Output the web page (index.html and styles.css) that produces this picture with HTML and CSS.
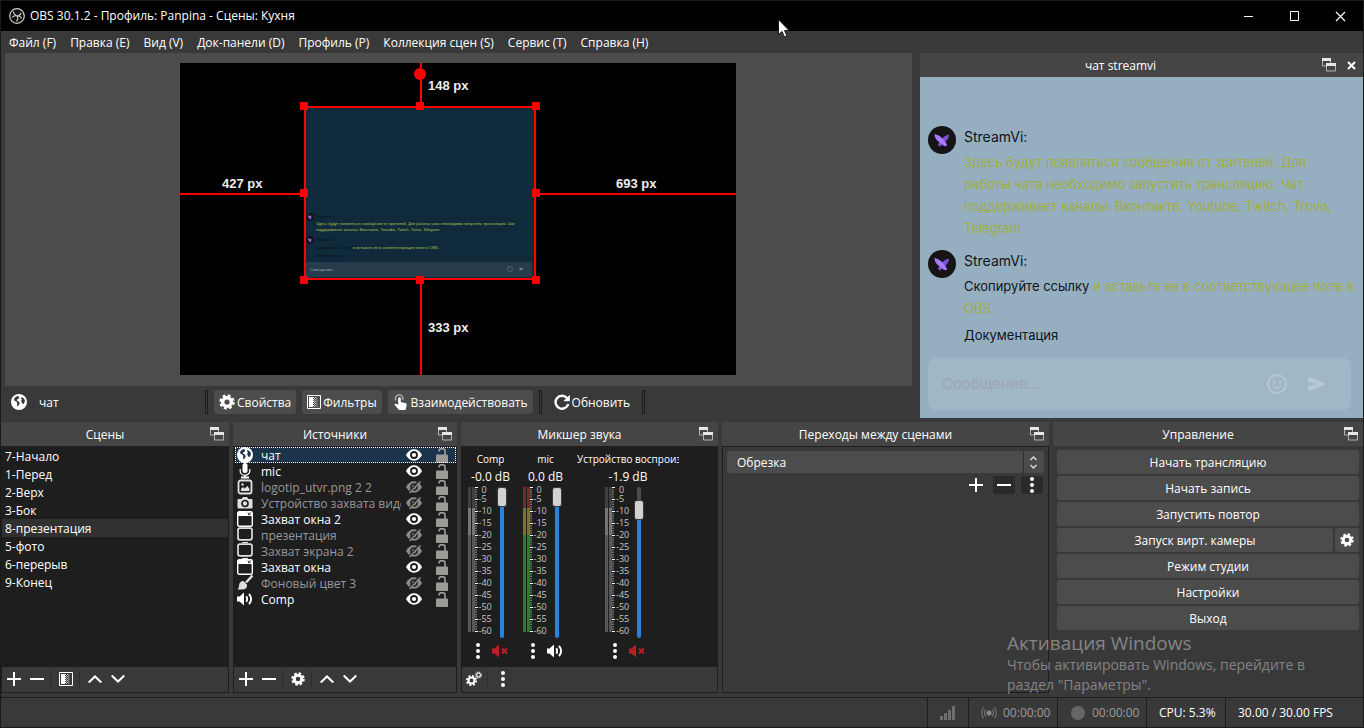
FILE: index.html
```html
<!DOCTYPE html>
<html lang="ru">
<head>
<meta charset="utf-8">
<title>OBS 30.1.2 - Профиль: Panpina - Сцены: Кухня</title>
<link rel="stylesheet" href="styles.css">
</head>
<body>
<svg class="sprite" aria-hidden="true">
  <symbol id="popout" viewBox="0 0 14 14"><path d="M.5 1v7h4M8.500 5V1" fill="none" stroke="#b4b4b4"/><path d="M0 0h9v3H0z" fill="#e6e6e6"/><path d="M4.500 7v6h9V7" fill="none" stroke="#b4b4b4"/><path d="M4 5h10v3H4z" fill="#e6e6e6"/></symbol>
  <symbol id="globe" viewBox="0 0 16 16"><circle cx="8" cy="8" r="8" fill="#fff"/><path class="land" d="M7 2 4.500 3 3 5l.300 1.500L5 7.500l1.300 1.200-.300 2L6.800 13l.900-2L9 9 7.500 7.500 5.800 6.500 6.500 5l1.500-.5V3zM10.500 3 10 4.500l1 1L10 7l.800 1.500 1.200 2 1.200-1.500.800-2-1-2.500z"/></symbol>
  <symbol id="gear" viewBox="0 0 16 16"><circle cx="8" cy="8" r="4.300" fill="none" stroke="#fff" stroke-width="3.400"/><circle cx="8" cy="8" r="6.300" fill="none" stroke="#fff" stroke-width="2.800" stroke-dasharray="2.750 2.198"/></symbol>
  <symbol id="filters" viewBox="0 0 14 14"><path d="M.5.5h13v13H.5z" fill="none" stroke="#fff"/><path d="M2 2h4v10H2z" fill="#fff"/><path d="M6.500 2v10" stroke="#fff" stroke-dasharray="1 1"/><path d="M7.500 3v9M8.500 2v10" stroke="#bbb" stroke-dasharray="1 1"/><path d="M9 2h1v10H9z" fill="#777"/><path d="M10.500 3v9" stroke="#777" stroke-dasharray="1 1"/></symbol>
  <symbol id="hand" viewBox="0 0 14 16"><path d="M2 6.500A3.700 3.700 0 1 1 8.500 6" fill="none" stroke="#a8a8a8" stroke-width="1.500"/><path d="M4.200 4.500a1.300 1.300 0 0 1 2.600 0V8L12 9.200q.800.300.700 1.200L12 14.500q0 1.500-1.500 1.500H5L.700 11q-.500-1 .600-1.300.700-.2 2.900 1z" fill="#fff"/></symbol>
  <symbol id="refresh" viewBox="0 0 16 16"><path d="M13 4A6.500 6.500 0 1 0 14.300 10" fill="none" stroke="#fff" stroke-width="2.400"/><path d="M15.800.800v6.500H9.300z" fill="#fff"/></symbol>
  <symbol id="mic" viewBox="0 0 16 16"><rect x="5.500" y="0" width="5" height="10" rx="2.500" fill="#fff"/><path d="M3.200 6v2a4.800 4.300 0 0 0 9.600 0V6" fill="none" stroke="#fff" stroke-width="1.200"/><path d="M7.300 12h1.400v1.500H12V15.500H4V13.500h3.300z" fill="#fff"/></symbol>
  <symbol id="image" viewBox="0 0 16 16"><rect x="1.500" y="1.500" width="13" height="13" rx="2" fill="none" stroke="#e0e0e0" stroke-width="1.800"/><path d="M4 12V10l2-2 1.500 1.500L10.500 7 12.500 10v2z" fill="#e0e0e0"/><circle cx="5.500" cy="5.500" r="1.200" fill="#e0e0e0"/></symbol>
  <symbol id="camera" viewBox="0 0 16 16"><path d="M1.500 4H4.500L6 2h4l1.500 2h3q1 0 1 1v7.500q0 1-1 1h-13q-1 0-1-1V5q0-1 1-1z" fill="#e0e0e0"/><circle cx="8" cy="8.500" r="3" fill="none" stroke="#1f1e1f" stroke-width="1.700"/></symbol>
  <symbol id="window" viewBox="0 0 16 16"><rect x=".7" y=".7" width="14.600" height="14.600" rx="1.500" fill="none" stroke="#fff" stroke-width="1.400"/><path d="M1 1h14v4H1z" fill="#fff"/><path d="m11 1.500 2.500 2.500M13.500 1.500 11 4" stroke="#1f1e1f"/></symbol>
  <symbol id="display" viewBox="0 0 16 16"><rect x="1" y="1.200" width="14" height="11.600" rx="2" fill="none" stroke="#e0e0e0" stroke-width="1.700"/><path d="M5 15h6v1H5z" fill="#e0e0e0"/></symbol>
  <symbol id="brush" viewBox="0 0 16 16"><path d="M15.500.5 9 7.500" stroke="#e0e0e0" stroke-width="2.400"/><path d="M6.500 6 10 9.500q.5 5-5 5H.500Q2 13 2 10.500 2.500 6 6.500 6z" fill="#e0e0e0"/></symbol>
  <symbol id="speaker" viewBox="0 0 16 14"><path d="M0 4.500h2.500L7 .5v13L2.500 9.500H0z" fill="#fff"/><path d="M9.300 4.200q1.700 2.800 0 5.600M12 1.800q4.200 5.200 0 10.400" fill="none" stroke="#fff" stroke-width="1.900"/></symbol>
  <symbol id="muted" viewBox="0 0 16 14"><path d="M0 4.500h2.500L7 .5v13L2.500 9.500H0z" fill="#c01c28"/><path d="m10 4.500 5 5M15 4.500l-5 5" stroke="#c01c28" stroke-width="2"/></symbol>
  <symbol id="eye" viewBox="0 0 16 12"><path d="M0 6Q3 .3 8 .3T16 6Q13 11.700 8 11.700T0 6z" fill="#fff"/><circle cx="8" cy="6" r="3" fill="none" stroke="#1f1e1f" stroke-width="1.800"/></symbol>
  <symbol id="eyeoff" viewBox="0 0 16 12"><path d="M0 6Q3 .3 8 .3T16 6Q13 11.700 8 11.700T0 6z" fill="#8c8a86"/><circle cx="8" cy="6" r="3" fill="none" stroke="#1f1e1f" stroke-width="1.500"/><path d="M2 12.500 13.500-1" stroke="#1f1e1f" stroke-width="1.500"/><path d="M3.500 12 14.500.5" stroke="#8c8a86" stroke-width="1.500"/></symbol>
  <symbol id="lock" viewBox="0 0 12 15"><path d="M3 3.500V3a3 2.400 0 0 1 6 0v5" fill="none" stroke="#9c9a97" stroke-width="1.700"/><rect x="0" y="6.500" width="12" height="8.500" rx="1" fill="#9c9a97"/></symbol>
  <symbol id="plus" viewBox="0 0 14 14"><path d="M7 0v14M0 7h14" stroke="#fff" stroke-width="2"/></symbol>
  <symbol id="minus" viewBox="0 0 14 14"><path d="M0 7h14" stroke="#fff" stroke-width="2"/></symbol>
  <symbol id="up" viewBox="0 0 14 14"><path d="M.700 10.500 7 4.500l6.300 6" fill="none" stroke="#fff" stroke-width="2"/></symbol>
  <symbol id="down" viewBox="0 0 14 14"><path d="M.700 3.500 7 9.500l6.300-6" fill="none" stroke="#fff" stroke-width="2"/></symbol>
  <symbol id="dots" viewBox="0 0 4 16"><circle cx="2" cy="2" r="2" fill="#fff"/><circle cx="2" cy="8" r="2" fill="#fff"/><circle cx="2" cy="14" r="2" fill="#fff"/></symbol>
  <symbol id="gears" viewBox="0 0 16 16"><circle cx="5.500" cy="9.500" r="3" fill="none" stroke="#fff" stroke-width="2.200"/><circle cx="5.500" cy="9.500" r="4.700" fill="none" stroke="#fff" stroke-width="1.800" stroke-dasharray="1.900 1.791"/><circle cx="12.500" cy="4" r="1.900" fill="none" stroke="#ddd" stroke-width="1.300"/><circle cx="12.500" cy="4" r="2.900" fill="none" stroke="#ddd" stroke-width="1.200" stroke-dasharray="1.200 1.078"/></symbol>
  <symbol id="butterfly" viewBox="0 0 28 28"><circle cx="14" cy="14" r="14" fill="#151515"/><path d="M21 8.500q-5 1-7.500 5L10 18q0 2 2 2.500 2-1 3-3 1 3 3.500 2.500.5-2-1-4.500Q21 12.500 21 8.500z" fill="#7c4fd8"/><path d="M6.500 8q5 1 8.500 5l4 6q-1 2-3.500.5l-5-4Q6.500 12.500 6.500 8z" fill="#a67dff"/></symbol>
  <symbol id="ticks" viewBox="0 0 3 146"><path d="M1 0v145" stroke="#8a8a8a" stroke-width="2" stroke-dasharray="1 1.400"/><path d="M1.500 0v146" stroke="#fff" stroke-width="3" stroke-dasharray="1 11"/></symbol>
</svg>

<header class="titlebar">
  <svg class="logo" viewBox="0 0 16 16"><circle cx="8" cy="8" r="7.300" fill="#111" stroke="#d0d0d0" stroke-width="1.200"/><path d="M4.500 3.500q0 3 3.500 4.500 3 0 4-3M8 8q1.800 2.500-.5 5.500M8 8Q5 7 3 9.500M8 8q3.500-.5 4.500 2.500" fill="none" stroke="#d0d0d0" stroke-width="1.100"/></svg>
  <span class="title">OBS 30.1.2 - Профиль: Panpina - Сцены: Кухня</span>
  <div class="winbuttons">
    <button aria-label="Свернуть"><svg viewBox="0 0 11 11"><path d="M1 5.500h9" stroke="#fff"/></svg></button>
    <button aria-label="Развернуть"><svg viewBox="0 0 11 11"><path d="M1.500.5h8v9h-8z" fill="none" stroke="#fff"/></svg></button>
    <button aria-label="Закрыть"><svg viewBox="0 0 11 11"><path d="m1 1 9 9M10 1 1 10" stroke="#fff" stroke-width="1.200"/></svg></button>
  </div>
</header>

<nav class="menubar">
  <button>Файл (F)</button><button>Правка (E)</button><button>Вид (V)</button><button>Док-панели (D)</button><button>Профиль (P)</button><button>Коллекция сцен (S)</button><button>Сервис (T)</button><button>Справка (H)</button>
</nav>

<main class="upper">
  <section class="stage">
    <div class="preview">
      <svg class="canvas" viewBox="0 0 556 312">
        <rect width="556" height="312" fill="#000"/>
        <rect x="125" y="44" width="230" height="172" fill="#0e2a3b"/>
        <rect x="126" y="199" width="226" height="15" rx="2" fill="#263c4b"/>
        <use href="#butterfly" x="126" y="150" width="8" height="8"/>
        <use href="#butterfly" x="126" y="173" width="8" height="8"/>
        <g class="tiny">
          <text class="dim" x="136" y="155">StreamVi:</text>
          <text x="136" y="162">Здесь будут появляться сообщения от зрителей. Для работы чата необходимо запустить трансляцию. Чат</text>
          <text x="136" y="168">поддерживает каналы: Вконтакте, Youtube, Twitch, Trovo, Telegram</text>
          <text class="dim" x="136" y="178">StreamVi:</text>
          <text x="136" y="186"><tspan class="dim">Скопируйте ссылку</tspan> и вставьте ее в соответствующее поле в OBS.</text>
          <text class="dim" x="136" y="194">Документация</text>
          <text class="hint" x="130" y="208">Сообщение...</text>
        </g>
        <circle cx="330" cy="206" r="2.500" fill="none" stroke="#6b7c87" stroke-width=".6"/>
        <path d="m339 204 5 2-5 2 1-2z" fill="#6b7c87"/>
        <g fill="none" stroke="#f00" stroke-width="2">
          <path d="M241 0v44M241 216v96M0 131h125M355 131h201"/>
          <rect x="125" y="44" width="230" height="172"/>
        </g>
        <g fill="#f00">
          <circle cx="240" cy="11" r="6"/>
          <path d="M120 39h8v8h-8zM236 39h8v8h-8zM352 39h8v8h-8zM120 126h8v8h-8zM352 126h8v8h-8zM120 213h8v8h-8zM236 213h8v8h-8zM352 213h8v8h-8z"/>
        </g>
        <g class="measure">
          <text x="248" y="27">148 px</text>
          <text x="42" y="125">427 px</text>
          <text x="436" y="125">693 px</text>
          <text x="248" y="269">333 px</text>
        </g>
      </svg>
    </div>
    <div class="context">
      <div class="source-name"><svg class="i16 on-panel"><use href="#globe"/></svg><span>чат</span></div>
      <i class="grip"></i>
      <button class="btn"><svg class="i16"><use href="#gear"/></svg><span>Свойства</span></button>
      <button class="btn"><svg class="i14"><use href="#filters"/></svg><span>Фильтры</span></button>
      <button class="btn"><svg class="i16"><use href="#hand"/></svg><span>Взаимодействовать</span></button>
      <i class="grip"></i>
      <button class="btn flat"><svg class="i16"><use href="#refresh"/></svg><span>Обновить</span></button>
      <i class="grip"></i>
    </div>
  </section>

  <section class="chat">
    <header class="dockhead"><h2>чат streamvi</h2><button aria-label="Открепить"><svg class="i14"><use href="#popout"/></svg></button><button aria-label="Закрыть"><svg class="i9" viewBox="0 0 9 9"><path d="m1 1 7 7M8 1 1 8" stroke="#fff" stroke-width="2"/></svg></button></header>
    <div class="chatbody">
      <article class="msg">
        <svg class="avatar"><use href="#butterfly"/></svg>
        <div><h3>StreamVi:</h3><p>Здесь будут появляться сообщения от зрителей. Для работы чата необходимо запустить трансляцию. Чат поддерживает каналы: Вконтакте, Youtube, Twitch, Trovo, Telegram</p></div>
      </article>
      <article class="msg">
        <svg class="avatar"><use href="#butterfly"/></svg>
        <div><h3>StreamVi:</h3><p><a href="#copy">Скопируйте ссылку</a> и вставьте ее в соответствующее поле в OBS.</p><p class="docs"><a href="#docs">Документация</a></p></div>
      </article>
      <form class="composer">
        <input type="text" aria-label="Сообщение" placeholder="Сообщение...">
        <button type="button" aria-label="Смайлики"><svg class="i20" viewBox="0 0 20 20"><circle cx="10" cy="10" r="9" fill="none" stroke="#b5c8d4" stroke-width="1.800"/><circle cx="7" cy="8" r="1.300" fill="#b5c8d4"/><circle cx="13" cy="8" r="1.300" fill="#b5c8d4"/><path d="M6 12q4 4.500 8 0" fill="none" stroke="#b5c8d4" stroke-width="1.600"/></svg></button>
        <button type="button" aria-label="Отправить"><svg class="i20" viewBox="0 0 20 20"><path d="M1 2.500 19 10 1 17.500V12l9-2-9-2z" fill="#b5c8d4"/></svg></button>
      </form>
    </div>
  </section>
</main>

<section class="docks">
  <section class="dock">
    <header class="dockhead"><h2>Сцены</h2><button aria-label="Открепить"><svg class="i14"><use href="#popout"/></svg></button></header>
    <div class="framed">
      <ul class="scenes"><li>7-Начало</li><li>1-Перед</li><li>2-Верх</li><li>3-Бок</li><li class="active">8-презентация</li><li>5-фото</li><li>6-перерыв</li><li>9-Конец</li></ul>
      <div class="tools"><button aria-label="Добавить"><svg class="i14"><use href="#plus"/></svg></button><button aria-label="Удалить"><svg class="i14"><use href="#minus"/></svg></button><i></i><button aria-label="Фильтры"><svg class="i14"><use href="#filters"/></svg></button><i></i><button aria-label="Вверх"><svg class="i14"><use href="#up"/></svg></button><button aria-label="Вниз"><svg class="i14"><use href="#down"/></svg></button></div>
    </div>
  </section>

  <section class="dock">
    <header class="dockhead"><h2>Источники</h2><button aria-label="Открепить"><svg class="i14"><use href="#popout"/></svg></button></header>
    <div class="framed">
      <ul class="sources">
        <li class="selected"><svg class="i16 on-sel"><use href="#globe"/></svg><span>чат</span><svg class="eye"><use href="#eye"/></svg><svg class="lock"><use href="#lock"/></svg></li>
        <li><svg class="i16"><use href="#mic"/></svg><span>mic</span><svg class="eye"><use href="#eye"/></svg><svg class="lock"><use href="#lock"/></svg></li>
        <li class="off"><svg class="i16"><use href="#image"/></svg><span>logotip_utvr.png 2 2</span><svg class="eye"><use href="#eyeoff"/></svg><svg class="lock"><use href="#lock"/></svg></li>
        <li class="off"><svg class="i16"><use href="#camera"/></svg><span>Устройство захвата видео</span><svg class="eye"><use href="#eyeoff"/></svg><svg class="lock"><use href="#lock"/></svg></li>
        <li><svg class="i16"><use href="#window"/></svg><span>Захват окна 2</span><svg class="eye"><use href="#eye"/></svg><svg class="lock"><use href="#lock"/></svg></li>
        <li class="off"><svg class="i16"><use href="#display"/></svg><span>презентация</span><svg class="eye"><use href="#eyeoff"/></svg><svg class="lock"><use href="#lock"/></svg></li>
        <li class="off"><svg class="i16"><use href="#display"/></svg><span>Захват экрана 2</span><svg class="eye"><use href="#eyeoff"/></svg><svg class="lock"><use href="#lock"/></svg></li>
        <li><svg class="i16"><use href="#window"/></svg><span>Захват окна</span><svg class="eye"><use href="#eye"/></svg><svg class="lock"><use href="#lock"/></svg></li>
        <li class="off"><svg class="i16"><use href="#brush"/></svg><span>Фоновый цвет 3</span><svg class="eye"><use href="#eyeoff"/></svg><svg class="lock"><use href="#lock"/></svg></li>
        <li><svg class="i16"><use href="#speaker"/></svg><span>Comp</span><svg class="eye"><use href="#eye"/></svg><svg class="lock"><use href="#lock"/></svg></li>
      </ul>
      <div class="tools"><button aria-label="Добавить"><svg class="i14"><use href="#plus"/></svg></button><button aria-label="Удалить"><svg class="i14"><use href="#minus"/></svg></button><i></i><button aria-label="Свойства"><svg class="i14"><use href="#gear"/></svg></button><i></i><button aria-label="Вверх"><svg class="i14"><use href="#up"/></svg></button><button aria-label="Вниз"><svg class="i14"><use href="#down"/></svg></button></div>
    </div>
  </section>

  <section class="dock">
    <header class="dockhead"><h2>Микшер звука</h2><button aria-label="Открепить"><svg class="i14"><use href="#popout"/></svg></button></header>
    <div class="framed">
      <div class="mixer">
        <div class="channel muted">
          <label for="vol1">Comp</label><output>-0.0 dB</output>
          <div class="levels"><i class="meter"></i><i class="meter"></i><svg class="ticks"><use href="#ticks"/></svg>
            <ol><li>0</li><li>-5</li><li>-10</li><li>-15</li><li>-20</li><li>-25</li><li>-30</li><li>-35</li><li>-40</li><li>-45</li><li>-50</li><li>-55</li><li>-60</li></ol>
            <input id="vol1" type="range" min="0" max="100" value="100" style="--empty:0%"></div>
          <div class="chbuttons"><button aria-label="Меню"><svg class="dots"><use href="#dots"/></svg></button><button aria-label="Включить звук"><svg class="spk"><use href="#muted"/></svg></button></div>
        </div>
        <div class="channel">
          <label for="vol2">mic</label><output>0.0 dB</output>
          <div class="levels"><i class="meter"></i><i class="meter"></i><svg class="ticks"><use href="#ticks"/></svg>
            <ol><li>0</li><li>-5</li><li>-10</li><li>-15</li><li>-20</li><li>-25</li><li>-30</li><li>-35</li><li>-40</li><li>-45</li><li>-50</li><li>-55</li><li>-60</li></ol>
            <input id="vol2" type="range" min="0" max="100" value="100" style="--empty:0%"></div>
          <div class="chbuttons"><button aria-label="Меню"><svg class="dots"><use href="#dots"/></svg></button><button aria-label="Выключить звук"><svg class="spk"><use href="#speaker"/></svg></button></div>
        </div>
        <div class="channel muted wide">
          <label for="vol3">Устройство воспроизведения</label><output>-1.9 dB</output>
          <div class="levels"><i class="meter"></i><i class="meter"></i><svg class="ticks"><use href="#ticks"/></svg>
            <ol><li>0</li><li>-5</li><li>-10</li><li>-15</li><li>-20</li><li>-25</li><li>-30</li><li>-35</li><li>-40</li><li>-45</li><li>-50</li><li>-55</li><li>-60</li></ol>
            <input id="vol3" type="range" min="0" max="100" value="90" style="--empty:14%"></div>
          <div class="chbuttons"><button aria-label="Меню"><svg class="dots"><use href="#dots"/></svg></button><button aria-label="Включить звук"><svg class="spk"><use href="#muted"/></svg></button></div>
        </div>
      </div>
      <div class="tools"><button aria-label="Свойства аудио"><svg class="i16"><use href="#gears"/></svg></button><i></i><button aria-label="Меню"><svg class="dots"><use href="#dots"/></svg></button></div>
    </div>
  </section>

  <section class="dock">
    <header class="dockhead"><h2>Переходы между сценами</h2><button aria-label="Открепить"><svg class="i14"><use href="#popout"/></svg></button></header>
    <div class="framed transitions">
      <div class="combo"><select aria-label="Переход"><option>Обрезка</option></select><svg class="chevrons" viewBox="0 0 20 22"><path d="M.5 0v22" stroke="#2f2e2f"/><path d="m7.500 9 3-3 3 3M7.500 14l3 3 3-3" fill="none" stroke="#e0e0e0" stroke-width="1.300"/></svg></div>
      <div class="trbuttons"><button aria-label="Добавить"><svg class="i14"><use href="#plus"/></svg></button><button class="dark" aria-label="Удалить"><svg class="i14"><use href="#minus"/></svg></button><button class="dark" aria-label="Меню"><svg class="dots"><use href="#dots"/></svg></button></div>
    </div>
  </section>

  <section class="dock">
    <header class="dockhead"><h2>Управление</h2><button aria-label="Открепить"><svg class="i14"><use href="#popout"/></svg></button></header>
    <div class="controls">
      <button class="btn"><span>Начать трансляцию</span></button>
      <button class="btn"><span>Начать запись</span></button>
      <button class="btn"><span>Запустить повтор</span></button>
      <div class="pair"><button class="btn"><span>Запуск вирт. камеры</span></button><button class="btn" aria-label="Настройки камеры"><svg class="i14"><use href="#gear"/></svg></button></div>
      <button class="btn"><span>Режим студии</span></button>
      <button class="btn"><span>Настройки</span></button>
      <button class="btn"><span>Выход</span></button>
    </div>
  </section>
</section>

<footer class="status">
  <div class="net"><svg class="i16" viewBox="0 0 16 16"><path d="M0 11h3v4H0zM4 8h3v7H4zM8 5h3v10H8zM12 1h3v14h-3z" fill="#6e6e6e"/></svg></div>
  <div class="time"><svg class="i16" viewBox="0 0 16 16"><circle cx="8" cy="8" r="2.500" fill="#8a8a8a"/><path d="M4.800 4.500q-2.500 3.500 0 7M11.200 4.500q2.500 3.500 0 7M2.500 2.500q-3.500 5.500 0 11M13.500 2.500q3.500 5.500 0 11" fill="none" stroke="#6e6e6e" stroke-width="1.300"/></svg>00:00:00</div>
  <div class="time"><svg class="i16" viewBox="0 0 16 16"><circle cx="8" cy="8" r="7" fill="#666"/></svg>00:00:00</div>
  <div class="cpu">CPU: 5.3%</div>
  <div class="fps">30.00 / 30.00 FPS</div>
</footer>

<aside class="watermark"><h4>Активация Windows</h4><p>Чтобы активировать Windows, перейдите в раздел "Параметры".</p></aside>
<svg class="cursor" viewBox="0 0 12 19"><path d="M.5.5v15l3.500-3 2.500 5.500 2.500-1-2.500-5.500H11z" fill="#fff" stroke="#1a1a2a"/></svg>
</body>
</html>
```
FILE: styles.css
```css
:root {
  --window: #3a393a;
  --dark: #1f1e1f;
  --button: #4c4c4c;
  --head: #464546;
}
* { box-sizing: border-box; }
body {
  margin: 0;
  height: 100vh;
  display: flex;
  flex-direction: column;
  overflow: hidden;
  background: var(--window);
  border: 1px solid #1a1a1a;
  color: #fff;
  font: 12px/16px "Open Sans", "Noto Sans", sans-serif;
  position: relative;
}
h2, h3, h4, p, ul, ol { margin: 0; padding: 0; font-weight: 400; font-size: inherit; }
ul, ol { list-style: none; }
button, select, input { font: inherit; color: inherit; border: 0; margin: 0; padding: 0; background: none; }
button { display: flex; align-items: center; justify-content: center; }
svg { display: block; flex: none; }
.sprite { position: absolute; width: 0; height: 0; }
.i9 { width: 9px; height: 9px; }
.i14 { width: 14px; height: 14px; }
.i16 { width: 16px; height: 16px; }
.i20 { width: 20px; height: 20px; }
.dots { width: 4px; height: 16px; }
.land { fill: var(--land, #3a393a); }
.on-sel { --land: #1b344c; }

.titlebar { height: 30px; flex: none; display: flex; align-items: center; background: #000; padding-left: 8px; }
.logo { width: 16px; height: 16px; margin-right: 5px; }
.title { flex: 1; }
.winbuttons { display: flex; }
.winbuttons button { width: 46px; height: 30px; }
.winbuttons svg { width: 11px; height: 11px; }

.menubar { height: 22px; flex: none; display: flex; padding-left: 1px; }
.menubar button { padding: 2px 7px 0; white-space: nowrap; }

.upper { flex: 1; display: flex; min-height: 0; padding-left: 4px; gap: 8px; }
.stage { flex: 1; display: flex; flex-direction: column; min-width: 0; }
.preview { flex: 1; display: flex; align-items: center; justify-content: center; background: var(--button); padding: 0 1px 1px 0; min-height: 0; }
.canvas { width: 556px; height: 312px; }
.measure { font: bold 13px "Liberation Sans", Arial, sans-serif; fill: #eee; }
.tiny { font: 4px "Liberation Sans", Arial, sans-serif; fill: #b4c24a; }
.tiny .dim { fill: #06121b; }
.tiny .hint { fill: #a5b0b8; }
.context { height: 32px; flex: none; display: flex; align-items: center; gap: 6px; }
.context span { padding-top: 2px; }
.source-name { display: flex; align-items: center; gap: 12px; width: 194px; padding-left: 6px; }
.grip { width: 3px; height: 24px; border: 1px solid var(--dark); }
.btn { height: 24px; background: var(--button); border-radius: 3px; white-space: nowrap; }
.context .btn { padding: 0 5px; gap: 2px; }
.context .btn.flat { background: none; padding: 0 6px; }

.chat { width: 443px; flex: none; display: flex; flex-direction: column; }
.dockhead { height: 24px; flex: none; display: flex; align-items: stretch; background: var(--head); padding: 0 1px 0 3px; }
.dockhead h2 { flex: 1; text-align: center; line-height: 25px; white-space: nowrap; }
.dockhead button { width: 22px; }
.chatbody { flex: 1; display: flex; flex-direction: column; justify-content: flex-end; background: #95afc0; padding: 0 12px 8px 8px; font: 13px/22px Inter, sans-serif; }
.msg { display: flex; gap: 8px; padding-bottom: 11px; margin-right: -5px; color: #a2ad3c; }
.msg a, .msg h3 { color: #101418; text-decoration: none; }
.msg h3 { padding-bottom: 3px; font-size: 14px; }
.docs { padding-top: 5px; }
.avatar { width: 28px; height: 28px; }
.composer { height: 52px; flex: none; display: flex; align-items: center; gap: 20px; margin-top: 1px; padding: 0 24px 0 14px; border-radius: 8px; background: #9fb7c6; }
.composer input { flex: 1; min-width: 0; font-size: 15px; outline: 0; }
.composer input::placeholder { color: #9ea5b3; opacity: 1; }

.docks { height: 271px; flex: none; margin-top: 4px; display: grid; grid-template-columns: 228fr 224fr 257fr 327fr 310fr; gap: 4px; }
.dock { display: flex; flex-direction: column; min-width: 0; }
.framed { flex: 1; display: flex; flex-direction: column; border: 1px solid var(--dark); min-height: 0; }
.scenes, .sources, .mixer { flex: 1; background: var(--dark); }
.scenes li { height: 18px; line-height: 20px; padding-left: 3px; }
.scenes .active { background: #323132; }
.tools { height: 25px; flex: none; display: flex; align-items: center; padding-bottom: 2px; }
.tools button { width: 23px; height: 22px; }
.tools i { width: 1px; height: 17px; margin: 0 3px 0 2px; background: #2f2e2f; }

.sources li { height: 16px; display: flex; align-items: center; padding: 0 8px 0 3px; }
.sources span { flex: 1; margin-left: 8px; margin-right: 5px; padding-top: 2px; overflow: hidden; white-space: nowrap; }
.sources .off { color: #989798; }
.sources .selected { background: #1b344c; outline: 1px dotted #fff; outline-offset: -1px; margin-left: 1px; padding-left: 2px; }
.eye { width: 16px; height: 12px; }
.lock { width: 12px; height: 15px; margin-left: 14px; }

.mixer { display: flex; padding-left: 1px; }
.channel { width: 55px; display: flex; flex-direction: column; align-items: center; padding-top: 4px; }
.channel.wide { width: 102px; margin-left: 4px; }
.channel label { max-width: 100%; font-size: 10px; overflow: hidden; white-space: nowrap; line-height: 17px; height: 18px; }
.channel output { line-height: 16px; height: 18px; white-space: nowrap; }
.levels { width: 46px; height: 150px; display: flex; }
.meter { width: 3px; height: 145px; margin-right: 1px; background: linear-gradient(#7d2626 0 21px, #7d7526 21px 48px, #267f26 48px); }
.muted .meter { background: linear-gradient(#404040 0 21px, #757575 21px 48px, #575757 48px); }
.ticks { width: 3px; height: 146px; margin-left: -1px; }
.levels ol { width: 19px; padding-left: 1px; font-size: 9px; color: #c4c4c4; }
.levels li { height: 12px; line-height: 12px; }
.levels li:first-child { height: 6px; line-height: 6px; padding-left: 3px; }
.levels input { appearance: none; writing-mode: vertical-lr; direction: rtl; width: 10px; height: 151px; }
.levels input::-webkit-slider-runnable-track { width: 4px; height: 151px; border-radius: 2px; background: linear-gradient(var(--button) var(--empty), #2a82da var(--empty)); }
.levels input::-webkit-slider-thumb { appearance: none; width: 10px; height: 20px; margin-left: -3px; border: 1px solid #3a3a3a; border-radius: 3px; background: #d2d2d2; }
.chbuttons { width: 46px; display: flex; padding: 6px 0 0 8px; gap: 12px; align-items: center; }
.spk { width: 16px; height: 14px; }

.transitions { padding: 4px; }
.combo { position: relative; height: 22px; }
.combo select { appearance: none; width: 100%; height: 22px; padding: 2px 10px 0; border-radius: 3px; background: var(--button); }
.chevrons { position: absolute; right: 1px; top: 0; width: 20px; height: 22px; pointer-events: none; }
.trbuttons { display: flex; justify-content: flex-end; gap: 6px; padding: 3px 1px 0 0; }
.trbuttons button { width: 22px; height: 18px; border-radius: 3px; }
.trbuttons .dark { background: #2b2a2b; }

.controls { display: flex; flex-direction: column; gap: 2px; padding: 4px; }
.controls span { padding-top: 2px; }
.pair { display: flex; gap: 2px; }
.pair .btn:first-child { flex: 1; }
.pair .btn:last-child { width: 24px; }

.status { height: 30px; flex: none; display: flex; justify-content: flex-end; margin-top: 4px; border-top: 1px solid var(--dark); }
.status div { display: flex; align-items: center; border-left: 1px solid var(--dark); padding: 1px 0 0 12px; white-space: nowrap; }
.net { width: 41px; }
.time { width: 89px; gap: 6px; color: #9a999a; }
.cpu { width: 79px; }
.fps { width: 138px; }

.watermark { position: absolute; right: 34px; bottom: 32px; width: 322px; color: #848484; font-size: 14px; line-height: 20px; pointer-events: none; }
.watermark h4 { font-size: 19px; line-height: 24px; }
.cursor { position: absolute; left: 777px; top: 18px; width: 12px; height: 19px; }
```
